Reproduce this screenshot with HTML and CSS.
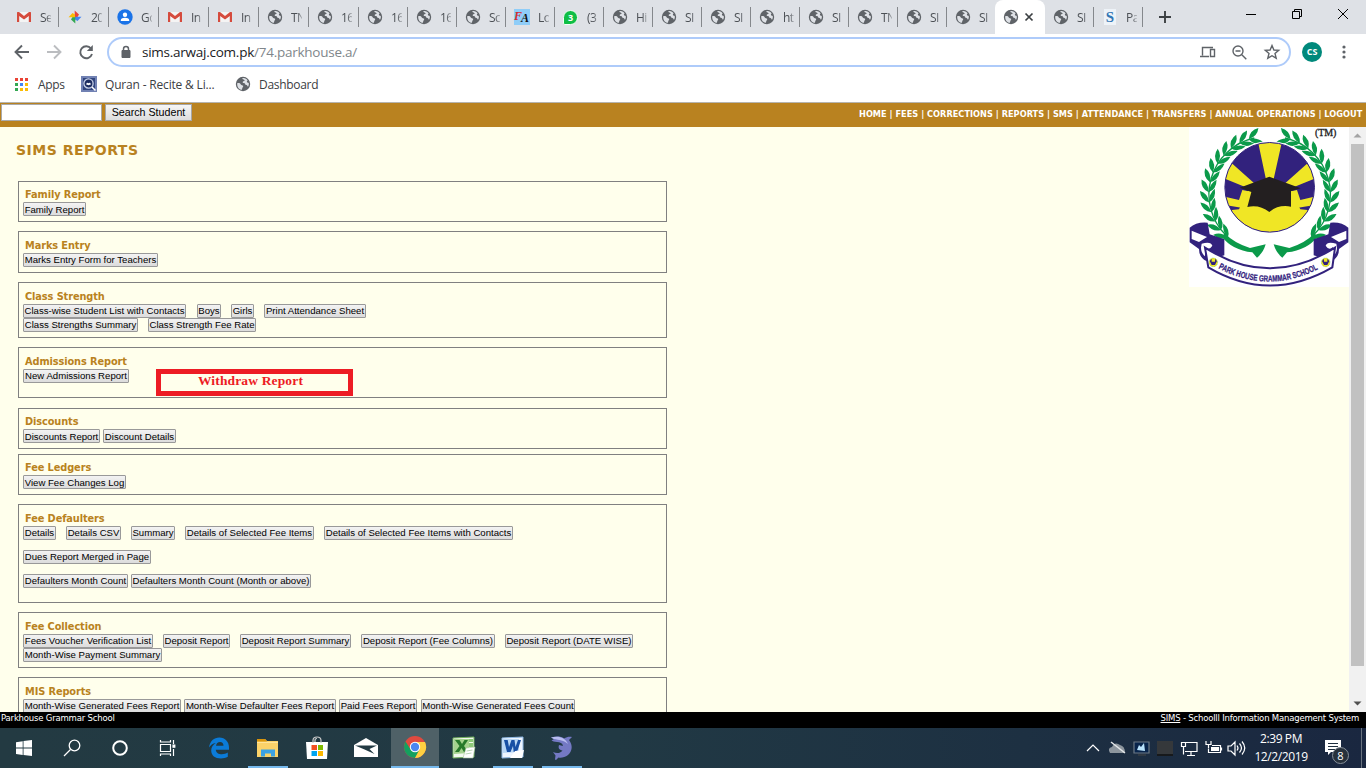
FILE: index.html
```html
<!DOCTYPE html>
<html lang="en">
<head>
<meta charset="utf-8">
<title>SIMS Reports</title>
<link rel="stylesheet" href="styles.css">
</head>
<body>
<svg class="defs" width="0" height="0">
  <defs>
    <symbol id="globe" viewBox="0 0 16 16"><circle cx="8" cy="8" r="7.2" fill="#5f6368"/><path d="M2.2 7.2c1.8-.3 3 .1 3.600 1.200.5 1 1.900.5 2.300 1.400.4 1-.5 1.500-.9 2.600l-.3 1.400C4 13.600 2 11.200 2.200 7.200z" fill="#dee1e6"/><path d="M7.200 2.200c2.600-.5 4.500.6 5.500 2.300-.7.3-1 .9-.7 1.600.4.8 1.300.6 1.800 1.200.2 1.300-.1 2.400-.8 3.400-.7-.4-.6-1.500-1.500-1.700-1.100-.2-1.600-.5-1.700-1.400 0-.6-.9-.4-1.500-.6-1-.4-.6-1.500.2-1.800.5-.2 1-.2 1.100-.9.100-.8-1.800-.5-2.400-2.100z" fill="#dee1e6"/></symbol>
    <symbol id="gmail" viewBox="0 0 16 16"><path d="M1 3h14v10H1z" fill="#f4f4f4"/><path d="M1 13V3.500L8 9l7-5.500V13h-2.200V7L8 10.600 3.200 7v6z" fill="#d54b3d"/><path d="M1 3.300 2 3h1l5 4 5-4h1l1 .3v1.500L8 10 1 4.800z" fill="#d54b3d"/></symbol>
    <symbol id="photos" viewBox="0 0 16 16"><path d="M7.700 8V1.500L12 5.500 10.500 8z" fill="#ea4335"/><path d="M8 7.700h6.500L10.500 12 8 10.500z" fill="#4285f4"/><path d="M8.300 8v6.500L4 10.500 5.500 8z" fill="#34a853"/><path d="M8 8.300H1.500L5.500 4 8 5.500z" fill="#fbbc04"/></symbol>
    <symbol id="contacts" viewBox="0 0 16 16"><circle cx="8" cy="8" r="7.700" fill="#1a73e8"/><circle cx="8" cy="5.800" r="2.200" fill="#fff"/><path d="M3.800 12V11c0-3 8.400-3 8.400 0v1z" fill="#fff"/></symbol>
    <g id="pair"><path d="M236 21Q246-4 273-3 264 20 236 21zM236 21Q262 22 275 42 246 44 236 21z"/></g>
    <g id="laurel" fill="#0b9a4a" transform="translate(-9 7)">
      <path d="M205 26A173 173 0 0 0 120 318" fill="none" stroke="#0b9a4a" stroke-width="4"/>
      <use href="#pair" transform="rotate(-16 242 195)"/><use href="#pair" transform="rotate(-26 242 195)"/><use href="#pair" transform="rotate(-36 242 195)"/><use href="#pair" transform="rotate(-46 242 195)"/><use href="#pair" transform="rotate(-56 242 195)"/><use href="#pair" transform="rotate(-66 242 195)"/><use href="#pair" transform="rotate(-76 242 195)"/><use href="#pair" transform="rotate(-86 242 195)"/><use href="#pair" transform="rotate(-96 242 195)"/><use href="#pair" transform="rotate(-106 242 195)"/><use href="#pair" transform="rotate(-116 242 195)"/><use href="#pair" transform="rotate(-126 242 195)"/><use href="#pair" transform="rotate(-136 242 195)"/>
      <path d="M116 312Q145 342 192 356L239 345Q232 370 213 385L199 369Q138 362 108 322z"/>
    </g>
    <g id="scroll">
      <path d="M2 302Q22 284 56 287L62 322 106 337V385L62 398 52 402Q30 392 30 366L2 346z" fill="#32227d"/>
      <path d="M8 311 54 330 30 345 8 336zM38 350Q66 342 70 356 60 372 48 360V388Q36 378 36 362z" fill="#fff"/>
    </g>
    <clipPath id="disc"><circle cx="242" cy="181" r="134"/></clipPath>
  </defs>
</svg>

<header class="browser">
  <div class="tabstrip">
    <div class="tab first"><svg><use href="#gmail"/></svg><span>Se</span></div>
    <div class="tab wide"><svg><use href="#photos"/></svg><span>20</span></div>
    <div class="tab wide"><svg><use href="#contacts"/></svg><span>Go</span></div>
    <div class="tab wide"><svg><use href="#gmail"/></svg><span>In</span></div>
    <div class="tab wide"><svg><use href="#gmail"/></svg><span>In</span></div>
    <div class="tab wide"><svg><use href="#globe"/></svg><span>TN</span></div>
    <div class="tab wide"><svg><use href="#globe"/></svg><span>16</span></div>
    <div class="tab"><svg><use href="#globe"/></svg><span>16</span></div>
    <div class="tab"><svg><use href="#globe"/></svg><span>16</span></div>
    <div class="tab"><svg><use href="#globe"/></svg><span>Sc</span></div>
    <div class="tab"><b class="fa"><i>F</i><em>A</em></b><span>Lo</span></div>
    <div class="tab"><b class="wa">3</b><span>(3</span></div>
    <div class="tab"><svg><use href="#globe"/></svg><span>Hi</span></div>
    <div class="tab"><svg><use href="#globe"/></svg><span>SI</span></div>
    <div class="tab"><svg><use href="#globe"/></svg><span>SI</span></div>
    <div class="tab"><svg><use href="#globe"/></svg><span>ht</span></div>
    <div class="tab"><svg><use href="#globe"/></svg><span>SI</span></div>
    <div class="tab"><svg><use href="#globe"/></svg><span>TN</span></div>
    <div class="tab"><svg><use href="#globe"/></svg><span>SI</span></div>
    <div class="tab nosep"><svg><use href="#globe"/></svg><span>SI</span></div>
    <div class="tab active"><svg><use href="#globe"/></svg><svg class="close" viewBox="0 0 10 10"><path d="M1.500 1.500l7 7M8.500 1.500l-7 7" stroke="#3c4043" stroke-width="1.700"/></svg></div>
    <div class="tab"><svg><use href="#globe"/></svg><span>SI</span></div>
    <div class="tab"><b class="dollar">S</b><span>Pa</span></div>
    <svg class="plus" viewBox="0 0 14 14"><path d="M7 1v12M1 7h12" stroke="#3c4043" stroke-width="1.900"/></svg>
    <svg class="winctl" viewBox="0 0 130 34" fill="none" stroke="#000"><path d="M12 14.500h10M58.500 11.500h7v7h-7zM60.500 11.500v-2h7v7h-2M104 9l10 10M114 9l-10 10"/></svg>
  </div>
  <div class="toolbar">
    <svg class="navicons" viewBox="0 0 107 36" fill="none" stroke-width="1.900"><path d="M29 18H16M22 11.500 15.500 18l6.500 6.500" stroke="#5f6368"/><path d="M47 18h13M54 11.500l6.500 6.500-6.500 6.500" stroke="#bbbdc0"/><path d="M91 14.500A6 6 0 1 0 92 20" stroke="#5f6368"/><path d="M92.800 11v6h-6z" fill="#5f6368"/></svg>
    <div class="omnibox">
      <svg class="lock" viewBox="0 0 10 14"><path d="M1 5.500h8v7H1z" fill="#5f6368" stroke="#5f6368"/><path d="M2.500 5.500V4a2.500 2.500 0 0 1 5 0v1.500" fill="none" stroke="#5f6368" stroke-width="1.500"/></svg>
      <span class="url">sims.arwaj.com.pk<i>/74.parkhouse.a/</i></span>
      <svg class="omniicons" viewBox="0 0 90 26" fill="none" stroke="#5f6368" stroke-width="1.400"><path d="M14 8.500H3.500v8M1 17.500h9M11.500 10.500h4v7h-4z"/><circle cx="39" cy="12" r="5"/><path d="M42.800 15.800l4.500 4.500M36.500 12h5"/><path d="M73 6.500l1.900 4.500 4.800.4-3.700 3.100 1.200 4.700-4.200-2.500-4.200 2.500 1.200-4.700-3.700-3.100 4.800-.4z"/></svg>
    </div>
    <b class="avatar">CS</b>
    <svg class="dots" viewBox="0 0 4 14" fill="#5f6368"><circle cx="2" cy="2" r="1.600"/><circle cx="2" cy="7" r="1.600"/><circle cx="2" cy="12" r="1.600"/></svg>
  </div>
  <div class="bookmarks">
    <svg class="apps" viewBox="0 0 13 13"><path d="M0 0h3v3H0zM5 0h3v3H5zM10 0h3v3h-3z" fill="#ea4335"/><path d="M0 5h3v3H0zM0 10h3v3H0z" fill="#34a853"/><path d="M5 5h3v3H5z" fill="#4285f4"/><path d="M10 5h3v3h-3zM5 10h3v3H5zM10 10h3v3h-3z" fill="#fbbc04"/></svg>
    <span class="bk-apps">Apps</span>
    <svg class="quran" viewBox="0 0 16 16"><path d="M0 0h16v16H0z" fill="#7181b3"/><path d="M2 2h12v12H2z" fill="#31457e"/><circle cx="7.500" cy="7.500" r="4.600" fill="#1c2c60" stroke="#c9d2e8" stroke-width="1.300"/><path d="M5.500 7q1-.7 2 .2 1-.9 2-.2v2q-1-.5-2 .2-1-.7-2-.2z" fill="#fff"/><path d="M11 11l3.500 3.500" stroke="#fff" stroke-width="1.500"/></svg>
    <span class="bk-quran">Quran - Recite &amp; Li...</span>
    <svg class="dash"><use href="#globe"/></svg>
    <span>Dashboard</span>
  </div>
</header>

<div class="topbar">
  <input class="searchbox" type="text"><button class="searchbtn">Search Student</button>
  <nav>HOME | FEES | CORRECTIONS | REPORTS | SMS | ATTENDANCE | TRANSFERS | ANNUAL OPERATIONS | LOGOUT</nav>
</div>

<main class="page">
  <div class="reports">
    <h1>SIMS REPORTS</h1>
    <section class="box tight h41"><h2>Family Report</h2><div class="row"><button style="width:63px">Family Report</button></div></section>
    <section class="box h42"><h2>Marks Entry</h2><div class="row"><button style="width:135px">Marks Entry Form for Teachers</button></div></section>
    <section class="box h56"><h2>Class Strength</h2><div class="row"><button style="width:163px">Class-wise Student List with Contacts</button><button class="off1" style="width:24px">Boys</button><button style="width:23px">Girls</button><button style="width:102px">Print Attendance Sheet</button></div><div class="row"><button style="width:115px">Class Strengths Summary</button><button style="width:108px">Class Strength Fee Rate</button></div></section>
    <section class="box h51 note-host"><h2>Admissions Report</h2><div class="row"><button style="width:106px">New Admissions Report</button></div><div class="note">Withdraw Report</div></section>
    <section class="box tight h41 gap10"><h2>Discounts</h2><div class="row near"><button style="width:77px">Discounts Report</button><button style="width:73px">Discount Details</button></div></section>
    <section class="box tight h41 gap5"><h2>Fee Ledgers</h2><div class="row"><button style="width:103px">View Fee Changes Log</button></div></section>
    <section class="box h99"><h2>Fee Defaulters</h2><div class="row spaced"><button style="width:33px">Details</button><button style="width:55px">Details CSV</button><button style="width:44px">Summary</button><button style="width:129px">Details of Selected Fee Items</button><button style="width:189px">Details of Selected Fee Items with Contacts</button></div><div class="row spaced"><button style="width:128px">Dues Report Merged in Page</button></div><div class="row near"><button style="width:105px">Defaulters Month Count</button><button style="width:180px">Defaulters Month Count (Month or above)</button></div></section>
    <section class="box h56"><h2>Fee Collection</h2><div class="row"><button style="width:130px">Fees Voucher Verification List</button><button style="width:67px">Deposit Report</button><button style="width:111px">Deposit Report Summary</button><button style="width:134px">Deposit Report (Fee Columns)</button><button style="width:128px">Deposit Report (DATE WISE)</button></div><div class="row"><button style="width:139px">Month-Wise Payment Summary</button></div></section>
    <section class="box h56"><h2>MIS Reports</h2><div class="row near"><button style="width:158px">Month-Wise Generated Fees Report</button><button style="width:152px">Month-Wise Defaulter Fees Report</button><button style="width:78px">Paid Fees Report</button><button class="off1" style="width:154px">Month-Wise Generated Fees Count</button></div></section>
  </div>
  <svg class="crest" viewBox="0 0 480 480">
    <path d="M0 0h480v480H0z" fill="#fff"/>
    <use href="#laurel"/><use href="#laurel" transform="translate(484 0) scale(-1 1)"/>
    <circle cx="242" cy="181" r="139" fill="#fff"/>
    <g clip-path="url(#disc)">
      <path d="M100 40h290v290H100z" fill="#32227d"/>
      <path d="M242 210 204 30h78zM242 210 130 110 100 152zM242 210 354 110 384 152zM100 207l50 12 10-30 26 5-20 50-60-10zM384 207l-50 12-10-30-26 5 20 50 60-10z" fill="#f0e625"/>
      <path d="M100 252 150 247 178 190 305 190 334 247 384 252V330H100z" fill="#f0e625"/>
    </g>
    <circle cx="242" cy="181" r="134.500" fill="none" stroke="#32227d" stroke-width="3"/>
    <path d="M152 182 241 149 335 184 306 192 306 239Q268 232 241 255 211 232 175 240L187 195Z" fill="#231f20"/>
    <use href="#scroll"/><use href="#scroll" transform="translate(480 0) scale(-1 1)"/>
    <path d="M48 362Q242 486 438 362L430 421Q242 530 58 421z" fill="#fff" stroke="#32227d" stroke-width="6"/>
    <path id="motto" d="M88 424Q242 504 394 423" fill="none"/>
    <text class="motto"><textPath href="#motto" textLength="312" lengthAdjust="spacingAndGlyphs">PARK HOUSE GRAMMAR SCHOOL</textPath></text>
    <g stroke="#0b9a4a" stroke-dasharray="3 2"><circle cx="73" cy="406" r="13" fill="#f0e625"/><circle cx="410" cy="406" r="13" fill="#f0e625"/></g>
    <path d="M62 402l6-7v9h10v-9l6 7-6 12H68zM399 402l6-7v9h10v-9l6 7-6 12h-10z" fill="#32227d"/>
    <text class="tm" x="378" y="26" textLength="64">(TM)</text>
  </svg>
  <div class="scrollbar"><svg viewBox="0 0 17 17"><path d="M4.500 10.500 8.500 6.500l4 4z" fill="#a3a3a3"/></svg><div class="thumb"></div><svg class="down" viewBox="0 0 17 17"><path d="M4.500 6.500h8l-4 4z" fill="#505050"/></svg></div>
</main>

<footer class="sitefoot"><span class="school">Parkhouse Grammar School</span><span class="system"><u>SIMS</u> - Schoolll Information Management System</span></footer>

<div class="taskbar">
  <div class="item"><svg viewBox="0 0 24 24"><path d="M4 6.200l6.700-1v6.300H4zM11.500 5 20 4v7.500h-8.500zM4 12.500h6.700v6.400L4 18zM11.500 12.500H20V20l-8.500-1z" fill="#fff"/></svg></div>
  <div class="item"><svg viewBox="0 0 24 24" fill="none" stroke="#fff" stroke-width="1.300"><circle cx="14.500" cy="9.500" r="5.300"/><path d="M10.500 13.500 4 20"/></svg></div>
  <div class="item"><svg viewBox="0 0 24 24"><circle cx="12" cy="12" r="6.800" fill="none" stroke="#fff" stroke-width="2"/></svg></div>
  <div class="item"><svg viewBox="0 0 24 24" fill="none" stroke="#fff" stroke-width="1.200"><path d="M4.500 8.500h10v7h-10zM4.500 4v2h10V4M4.500 20v-2h10v2M17.500 4v4M17.500 13v7"/><path d="M17 9.200h1.800v2H17z" fill="#fff"/></svg></div>
  <div class="item w50"><svg viewBox="0 0 24 24"><path d="M2 11.500C3 5 7 1.500 12.300 1.500c6 0 9.700 4.500 9.700 10v2.200H8.800c.1 3.200 3 4.500 6 4.500 2.300 0 4.300-.6 6-1.700v4.300C18.800 22 16.500 22.500 14 22.500 8 22.500 4.200 19.500 4.200 14.500c0-3.200 1.700-6 4.600-7.600C5.700 7.300 3.500 9 2 11.500zM9 9.800h7.500c0-2.300-1.200-3.800-3.500-3.800S9.400 7.500 9 9.800z" fill="#0b7bd8"/></svg></div>
  <div class="item on"><svg viewBox="0 0 24 24"><path d="M1 3h8l2 2h11v16H1z" fill="#fbd269"/><path d="M1 3h8l2 2.500H1z" fill="#d9940b"/><path d="M5 20.500v-7h14v7h-4v-3H9v3z" fill="#3ba1e3"/><path d="M1 6h21v1H1z" fill="#ffe49a"/></svg></div>
  <div class="item"><svg viewBox="0 0 24 24"><path d="M1 6h22l-1 17H2z" fill="#fff"/><path d="M8 7V4.500Q8 1 12 1t4 3.500V7M10 6V4.500Q10 2.500 12 2.500" fill="none" stroke="#ccc" stroke-width="1.200"/><path d="M6.500 9H12v5H6.500z" fill="#f25022"/><path d="M13 9h5v5h-5z" fill="#7fba00"/><path d="M6.500 15H12v5H6.500z" fill="#00a4ef"/><path d="M13 15h5v5h-5z" fill="#ffb900"/></svg></div>
  <div class="item mail"><svg viewBox="0 0 24 24"><path d="M0 9 12 2l12 7v12H0z" fill="#fff"/><path d="M1 9.500h22l-7.500 3.500 5 5-10.500-4.700z" fill="#223a43"/></svg></div>
  <div class="item current"><svg viewBox="0 0 24 24"><circle cx="12" cy="12" r="11" fill="#e04a3f"/><path d="M2.500 6.500A11 11 0 0 0 12 23l5-8.500-5 2-5-3z" fill="#14a05f"/><path d="M12 23A11 11 0 0 0 22 7H12l4.500 7.500z" fill="#ffd041"/><circle cx="12" cy="12" r="5.200" fill="#fff"/><circle cx="12" cy="12" r="4.200" fill="#4a86f0"/></svg></div>
  <div class="item"><svg viewBox="0 0 24 24"><path d="M1 2 22 1v20L1 22z" fill="#f1f9ee" stroke="#71b15c"/><path d="M2 3h15v14L2 18z" fill="#a5d38e"/><path d="M17 3h4v3h-4zM17 7h4v4h-4z" fill="#8cc878"/><path d="M3 4h4.500l2.500 4 2.500-4H16l-4 6 4.500 6H12l-2.500-4L7 16H3l4.500-6z" fill="#287a2b"/><path d="M14 12l9-1-2 11H11z" fill="#fff" stroke="#a6c49b" stroke-width=".6"/><path d="M14.500 15l6-1M13.500 18l6-1" stroke="#a7c99f" stroke-width=".8"/></svg></div>
  <div class="item on"><svg viewBox="0 0 24 24"><path d="M1 2 22 1v20L1 22z" fill="#edf5ff" stroke="#90b9e5"/><path d="M2 3h16v13L2 17z" fill="#b9d7f5"/><path d="M3 4h3.700l1.300 7L10.500 4h3l1 7L17 4h3l-4 12h-3.300L12 10l-2.500 6H6z" fill="#174fa5"/><path d="M14 15l9-1-2 8H9z" fill="#fff"/></svg></div>
  <div class="item on"><svg viewBox="0 0 24 24"><path d="M1 1.500C6 0 11 0 14 2.500c3-2 6-2 8-1.500l-3 3c4 5 3.500 11-1 15-3 2.500-7 3-9.500 2.500L6 24l-1-.5.5-4L3 16c4 2 8 1 9.500-1.500C9 14 8 12 9 9l4 1c-.5-3-3-4-6-4C4 6 3 5 1.500 4.500L4 3z" fill="#7479c4"/><path d="M1 1.500C8-.5 15 1 18 8c-4-4-9-4-14-5z" fill="#b9bdf0"/></svg></div>
  <div class="tray">
    <svg class="trayicons" viewBox="0 0 170 40" fill="none" stroke="#fff" stroke-width="1.200"><path d="M7 23l6-6 6 6"/><path d="M30 25q-3-5 2-6 3-6 8-2 5 1 5 8z" fill="#8c959d" stroke="none"/><path d="M31 14l14 11" stroke="#e5e8ea" stroke-width="1.500"/><path d="M54 14h15v11H54z" fill="#08244b" stroke="#6c7985"/><path d="M57 22l2-5 2 2 3-4 1 8z" fill="#b9e3fc" stroke="none"/><path d="M58 26h8v2h-8z" fill="#303943" stroke="none"/><path d="M77 13h16v14H77z" fill="#35383b" stroke="none"/><path d="M77 26h16v2H77z" fill="#17191b" stroke="none"/><path d="M106 14.500h11v9h-12M101.500 14.500h4v4h-4zM103.500 18.500v8M111 24v3.500M107 27.500h8"/><path d="M126 13v3.500h5V13M128.500 17v3M132 17.500h8.500v7h-12v-4M141.500 19.500v3"/><path d="M131 19h8v4h-8z" fill="#fff" stroke="none"/><path d="M148 18h3l4-4v13l-4-4h-3zM157 17.500q2 2.500 0 5M159.500 15.500q4 4.500 0 9M162 13.500q5.500 6.500 0 13"/></svg>
    <div class="clock">2:39 PM<br>12/2/2019</div>
    <div class="notify"><svg viewBox="0 0 18 17"><path d="M0 0h16v12H6l-3 3v-3H0z" fill="#fff"/><path d="M3 3.500h10M3 6.500h10M3 9.500h7" stroke="#203040"/></svg><b>8</b></div>
  </div>
</div>
</body>
</html>
```
FILE: styles.css
```css
* { box-sizing: border-box; }
body { margin: 0; width: 1366px; height: 768px; overflow: hidden; display: flex; flex-direction: column; background: #fff; font-family: "Open Sans", "Noto Sans", sans-serif; }
.defs { position: absolute; }
.browser { height: 103px; flex: none; border-bottom: 1px solid #b6b4ae; }
.tabstrip { height: 34px; background: #dee1e6; display: flex; }
.tab { width: 49px; height: 34px; flex: none; padding-left: 8px; display: flex; align-items: center; font-size: 12px; color: #4c5055; background: linear-gradient(#85888c, #85888c) right 7px / 1px 20px no-repeat; }
.tab.first { width: 59px; padding-left: 16px; background-position: right 7px; }
.tab.wide { width: 50px; }
.tab.nosep { background: none; }
.tab svg { width: 16px; height: 16px; flex: none; }
.tab span { width: 11px; margin-left: 8px; overflow: hidden; white-space: nowrap; letter-spacing: -.5px; -webkit-mask-image: linear-gradient(90deg, #000 55%, rgba(0,0,0,.3)); mask-image: linear-gradient(90deg, #000 55%, rgba(0,0,0,.3)); }
.tab.active { width: 50px; margin-left: -1px; background: #fff; border-radius: 8px 8px 0 0; }
.tab .close { width: 10px; height: 10px; margin-left: 5px; }
.fa { width: 16px; height: 16px; background: #8fcdf8; font: bold 12px/15px "Liberation Serif", serif; color: #d32f2f; letter-spacing: -1px; white-space: nowrap; }
.fa em { color: #111; vertical-align: -2px; }
.wa { width: 15px; height: 15px; border-radius: 8px 8px 8px 2px; background: #0fbe45; border: 1px solid #f2fff5; color: #fff; font-size: 9px; line-height: 13px; text-align: center; margin-right: 1px; }
.dollar { width: 12px; height: 16px; margin: 0 2px; background: #eef3f8; font: bold 15px/16px "Liberation Serif", serif; text-align: center; color: #3276b5; }
.plus { width: 14px; height: 14px; margin: 10px 0 0 15px; }
.winctl { width: 130px; height: 34px; margin-left: auto; margin-right: 2px; }
.toolbar { height: 36px; display: flex; align-items: center; }
.navicons { width: 107px; height: 36px; }
.omnibox { width: 1184px; height: 30px; border: 2px solid #aecbfa; border-radius: 15px; display: flex; align-items: center; padding-left: 12px; }
.lock { width: 10px; height: 14px; }
.url { margin-left: 11px; font-size: 13.5px; letter-spacing: -.25px; color: #202124; line-height: 20px; }
.url i { color: #80868b; font-style: normal; }
.omniicons { width: 90px; height: 26px; margin-left: auto; }
.avatar { width: 20px; height: 20px; margin-left: 11px; border-radius: 50%; background: #00897b; color: #fff; font-size: 9px; line-height: 20px; text-align: center; }
.dots { width: 4px; height: 14px; margin-left: 20px; }
.bookmarks { height: 32px; padding: 0 0 4px 15px; display: flex; align-items: center; font-size: 12px; letter-spacing: -.3px; color: #3c4043; }
.apps { width: 13px; height: 13px; }
.bk-apps { width: 43px; margin-left: 10px; }
.quran { width: 16px; height: 16px; }
.bk-quran { width: 130px; margin-left: 8px; white-space: nowrap; letter-spacing: -.18px; }
.dash { width: 16px; height: 16px; margin-right: 8px; }
.topbar { height: 24px; flex: none; background: #b98220; display: flex; padding: 1px 3px 0 1px; }
.searchbox { width: 101px; height: 17px; margin: 0; padding: 0; border: 1px solid #aaa; background: #fff; }
.searchbtn { width: 87px; height: 17px; margin-left: 3px; padding: 0; border: 1px solid #a6a6a6; background: linear-gradient(#f6f6f6, #ddd); font: 10.7px/13px "Liberation Sans", sans-serif; color: #000; white-space: nowrap; }
nav { width: 504px; margin-left: auto; padding-top: 4px; color: #fff; font: bold 8.2px/12px "DejaVu Sans", sans-serif; letter-spacing: .03px; white-space: nowrap; }
.page { height: 585px; flex: none; overflow: hidden; background: #ffffec; display: flex; }
.reports { width: 649px; margin-left: 18px; }
h1 { margin: 0 0 0 -2px; height: 54px; padding-top: 14px; font: bold 14px/18px "DejaVu Sans", sans-serif; letter-spacing: .5px; color: #b98220; }
.box { height: 56px; margin-bottom: 9px; border: 1px solid #808080; padding: 8px 0 0 4px; }
.tight { padding-top: 7px; }
.h41 { height: 41px; } .h42 { height: 42px; } .h51 { height: 51px; } .h99 { height: 99px; }
.note-host { margin-bottom: 10px; position: relative; }
.gap10 { margin-bottom: 5px; }
h2 { margin: 0 0 0 2px; height: 13px; font: bold 9.8px/12px "DejaVu Sans", sans-serif; letter-spacing: -.1px; color: #b98220; white-space: nowrap; }
.row { display: flex; gap: 10px; }
.row.near { gap: 3px; }
.row.spaced { margin-bottom: 10px; }
.row button { flex: none; height: 14px; padding: 0; border: 1px solid #999; border-radius: 1px; background: linear-gradient(#f3f3f3, #dcdcdc); font: 9.6px/12px "Liberation Sans", sans-serif; color: #000; white-space: nowrap; display: flex; justify-content: center; }
.tight .row button { padding-top: 1px; }
.row .off1 { margin-left: 1px; }
.note { position: absolute; left: 137px; top: 21px; width: 197px; height: 27px; border: 5px solid #ed1c24; color: #ed1c24; font: bold 13.5px/14px "Liberation Serif", serif; letter-spacing: .15px; padding-right: 8px; text-align: center; }
.crest { width: 160px; height: 160px; margin-left: auto; }
.motto { font: bold 26px "Liberation Sans", sans-serif; fill: #32227d; stroke: #32227d; stroke-width: .8px; }
.tm { font: 30px "Liberation Serif", serif; fill: #222; stroke: #222; stroke-width: 1px; }
.scrollbar { width: 17px; background: #f1f1f1; display: flex; flex-direction: column; }
.scrollbar svg { width: 17px; height: 17px; }
.thumb { width: 13px; height: 522px; margin-left: 2px; background: #c1c1c1; }
.scrollbar .down { margin-top: auto; }
.sitefoot { height: 16px; flex: none; background: #000; color: #fff; display: flex; justify-content: space-between; padding: 0 7px 0 1px; font: 8.5px/12px "DejaVu Sans", sans-serif; letter-spacing: -.19px; white-space: nowrap; }
.taskbar { height: 40px; flex: none; display: flex; background: linear-gradient(90deg, #233a42, #213944 45%, #1d3042 75%, #1a2740); }
.item { width: 49px; height: 40px; flex: none; display: flex; align-items: center; justify-content: center; }
.item:nth-child(-n+4) { width: 48px; }
.item.w50 { width: 54px; }
.item:nth-child(6) { width: 44px; }
.item:nth-child(7) { width: 53px; }
.item.mail { width: 48px; padding-right: 2px; }
.item.current { width: 48px; background: #4f6167; border-bottom: 2px solid #76b9ed; }
.item svg { width: 24px; height: 24px; }
.item.on { background: linear-gradient(#76b9ed, #76b9ed) center bottom / 40px 2px no-repeat; }
.tray { margin-left: auto; display: flex; margin-right: 4px; border-right: 1px solid #69737f; color: #fff; }
.trayicons { width: 170px; height: 40px; }
.clock { width: 62px; text-align: center; font-size: 12px; line-height: 18px; letter-spacing: -.4px; padding-top: 2px; }
.notify { width: 49px; padding: 12px 0 0 13px; position: relative; }
.notify svg { width: 18px; height: 17px; }
.notify b { position: absolute; left: 20px; top: 19px; width: 17px; height: 17px; border: 1px solid #87909a; border-radius: 50%; background: #27313c; font: 11px/15px "Open Sans", sans-serif; text-align: center; }
```
